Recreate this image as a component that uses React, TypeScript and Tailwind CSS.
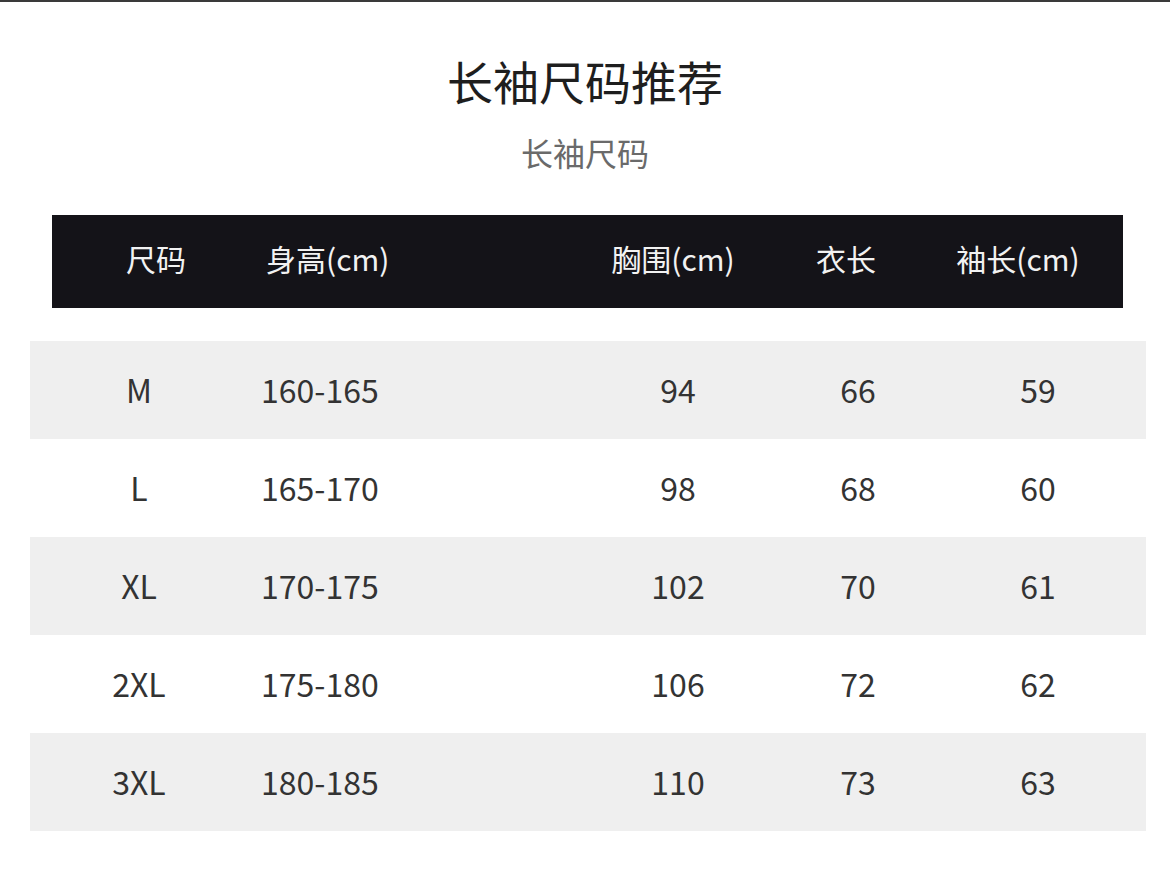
import React from 'react';

const rows = [
  { size: 'M', height: '160-165', chest: '94', length: '66', sleeve: '59' },
  { size: 'L', height: '165-170', chest: '98', length: '68', sleeve: '60' },
  { size: 'XL', height: '170-175', chest: '102', length: '70', sleeve: '61' },
  { size: '2XL', height: '175-180', chest: '106', length: '72', sleeve: '62' },
  { size: '3XL', height: '180-185', chest: '110', length: '73', sleeve: '63' },
];

const font = { fontFamily: '"Noto Sans CJK SC", "Noto Sans", sans-serif' };

export default function App() {
  return (
    <div className="w-[1170px] h-[889px] bg-white overflow-hidden" style={font}>
      <div className="h-[2px] bg-[#3a3a3a]" />

      {/* Titles */}
      <div className="mt-[50px] h-[56px] text-center text-[46px] leading-[56px] text-[#1e1e1e]">
        长袖尺码推荐
      </div>
      <div className="mt-[24px] h-[40px] text-center text-[32px] leading-[40px] text-[#6a6a6a]">
        长袖尺码
      </div>

      {/* Header bar */}
      <div className="mt-[43px] ml-[52px] w-[1071px] h-[93px] pb-[6px] bg-[#141318] grid grid-cols-[208px_323px_180px_166px_178px] items-center text-[30px] text-[#f2f2f2]">
        <div className="text-center">尺码</div>
        <div className="pl-[6px]">身高(cm)</div>
        <div className="text-center">胸围(cm)</div>
        <div className="text-center">衣长</div>
        <div className="text-center">袖长(cm)</div>
      </div>

      {/* Data rows */}
      <div className="mt-[33px] ml-[30px] w-[1116px]">
        {rows.map((r, i) => (
          <div
            key={r.size}
            className={`h-[98px] pb-[2px] grid grid-cols-[218px_340px_180px_180px_180px] items-center text-[32px] text-[#333333] ${
              i % 2 === 0 ? 'bg-[#efefef]' : 'bg-white'
            }`}
          >
            <div className="text-center">{r.size}</div>
            <div className="pl-[13px]">{r.height}</div>
            <div className="text-center">{r.chest}</div>
            <div className="text-center">{r.length}</div>
            <div className="text-center">{r.sleeve}</div>
          </div>
        ))}
      </div>
    </div>
  );
}
